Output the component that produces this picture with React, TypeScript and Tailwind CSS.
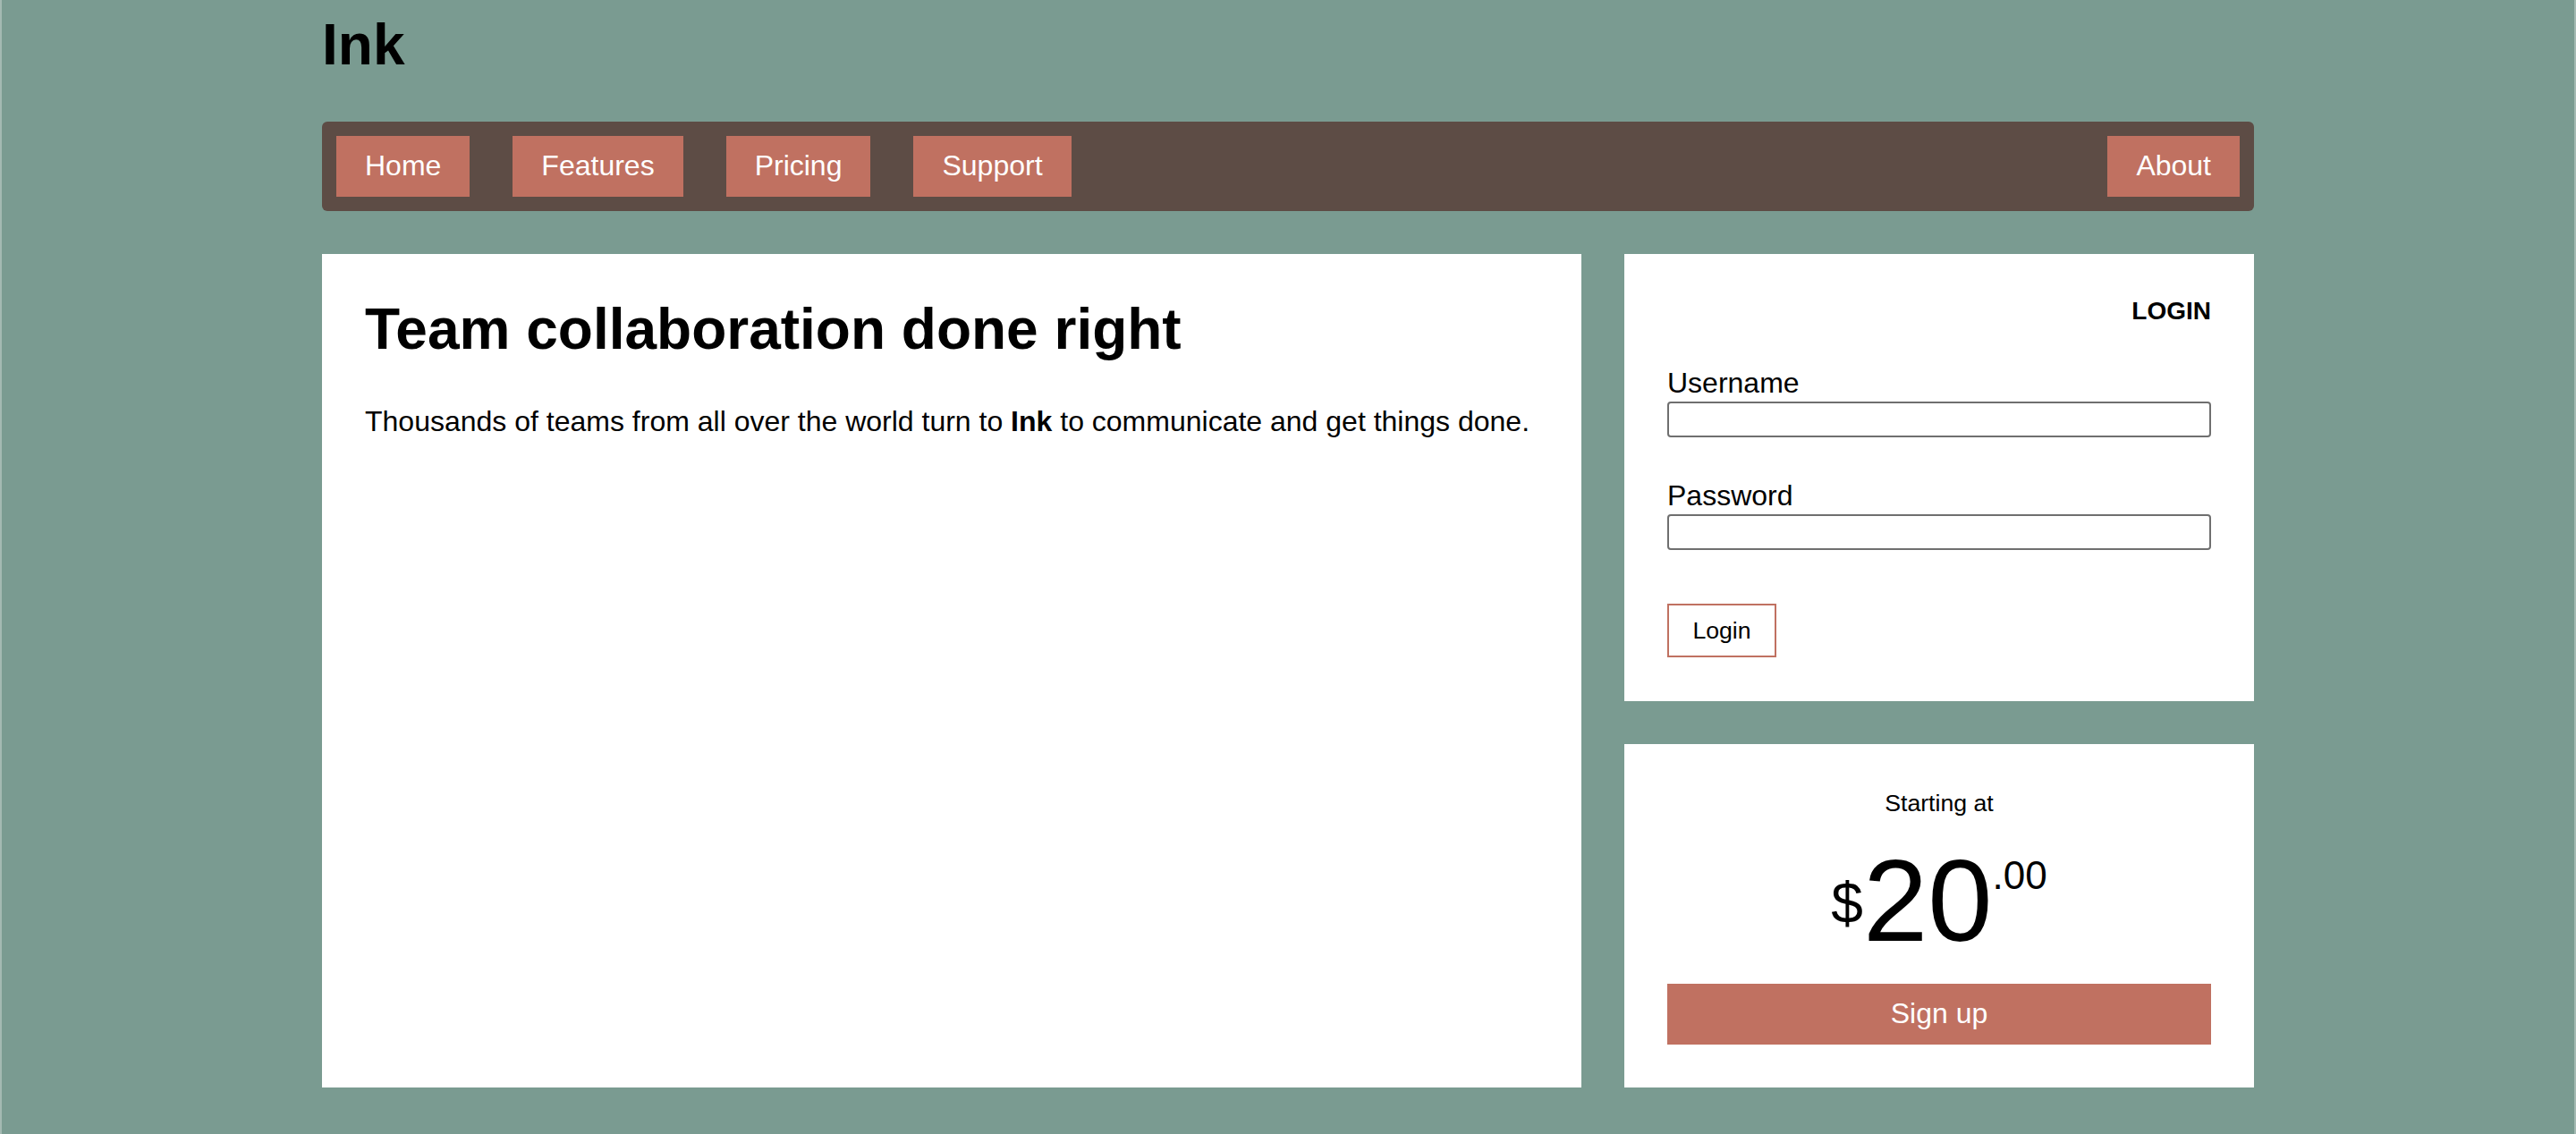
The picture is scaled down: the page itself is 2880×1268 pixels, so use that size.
export default function App() {
  const navItems = ["Home", "Features", "Pricing", "Support"];

  return (
    <div className="min-h-screen border-x-2 border-[#a4b9b2] bg-[#7a9b91] font-['Liberation_Sans',Arial,Helvetica,sans-serif] text-black">
      <div className="mx-auto w-[2160px] pt-[14px] pb-12">
        <h1 className="text-[64px] font-bold leading-[73.6px]">Ink</h1>

        {/* Top nav */}
        <nav className="mt-12 flex h-[100px] gap-12 rounded-[6px] bg-[#5d4c45] p-4">
          {navItems.map((item) => (
            <a
              key={item}
              href="#"
              className="flex h-[68px] items-center bg-[#c07161] px-8 text-[32px] leading-[37px] text-white"
            >
              {item}
            </a>
          ))}
          <a
            href="#"
            className="ml-auto flex h-[68px] items-center bg-[#c07161] px-8 text-[32px] leading-[37px] text-white"
          >
            About
          </a>
        </nav>

        <div className="mt-12 grid grid-cols-[1408px_704px] gap-12">
          {/* Hero */}
          <section className="bg-white p-12">
            <h2 className="text-[64px] font-bold leading-[73.6px]">
              Team collaboration done right
            </h2>
            <p className="mt-12 text-[32px] leading-[36.8px]">
              Thousands of teams from all over the world turn to <b>Ink</b> to
              communicate and get things done.
            </p>
          </section>

          <div className="flex flex-col gap-12">
            {/* Login */}
            <form className="bg-white px-12 pt-12 pb-[49px]">
              <div className="text-right text-[28px] font-bold leading-[32px]">LOGIN</div>
              <label className="mt-[46px] block text-[32px] leading-[37px]">Username</label>
              <input
                type="text"
                className="mt-[2px] block h-[40px] w-full rounded-[4px] border-2 border-[#6f6f6f] bg-white"
              />
              <label className="mt-[47px] block text-[32px] leading-[37px]">Password</label>
              <input
                type="password"
                className="mt-[2px] block h-[40px] w-full rounded-[4px] border-2 border-[#6f6f6f] bg-white"
              />
              <button
                type="button"
                className="mt-[60px] block h-[60px] w-[122px] border-2 border-[#c07161] bg-white text-[26.67px] leading-[30px]"
              >
                Login
              </button>
            </form>

            {/* Pricing */}
            <div className="bg-white px-12 pt-[50px] pb-12 text-center">
              <div className="text-[26.67px] leading-[32px]">Starting at</div>
              <div className="mt-[28px] h-[130px] text-[130px] leading-none">
                <span className="align-[20px] text-[64px]">$</span>
                <span>20</span>
                <span className="align-[58px] text-[44px]">.00</span>
              </div>
              <button
                type="button"
                className="mt-[28px] flex h-[68px] w-full items-center justify-center bg-[#c07161] text-[32px] leading-[37px] text-white"
              >
                Sign up
              </button>
            </div>
          </div>
        </div>
      </div>
    </div>
  );
}
